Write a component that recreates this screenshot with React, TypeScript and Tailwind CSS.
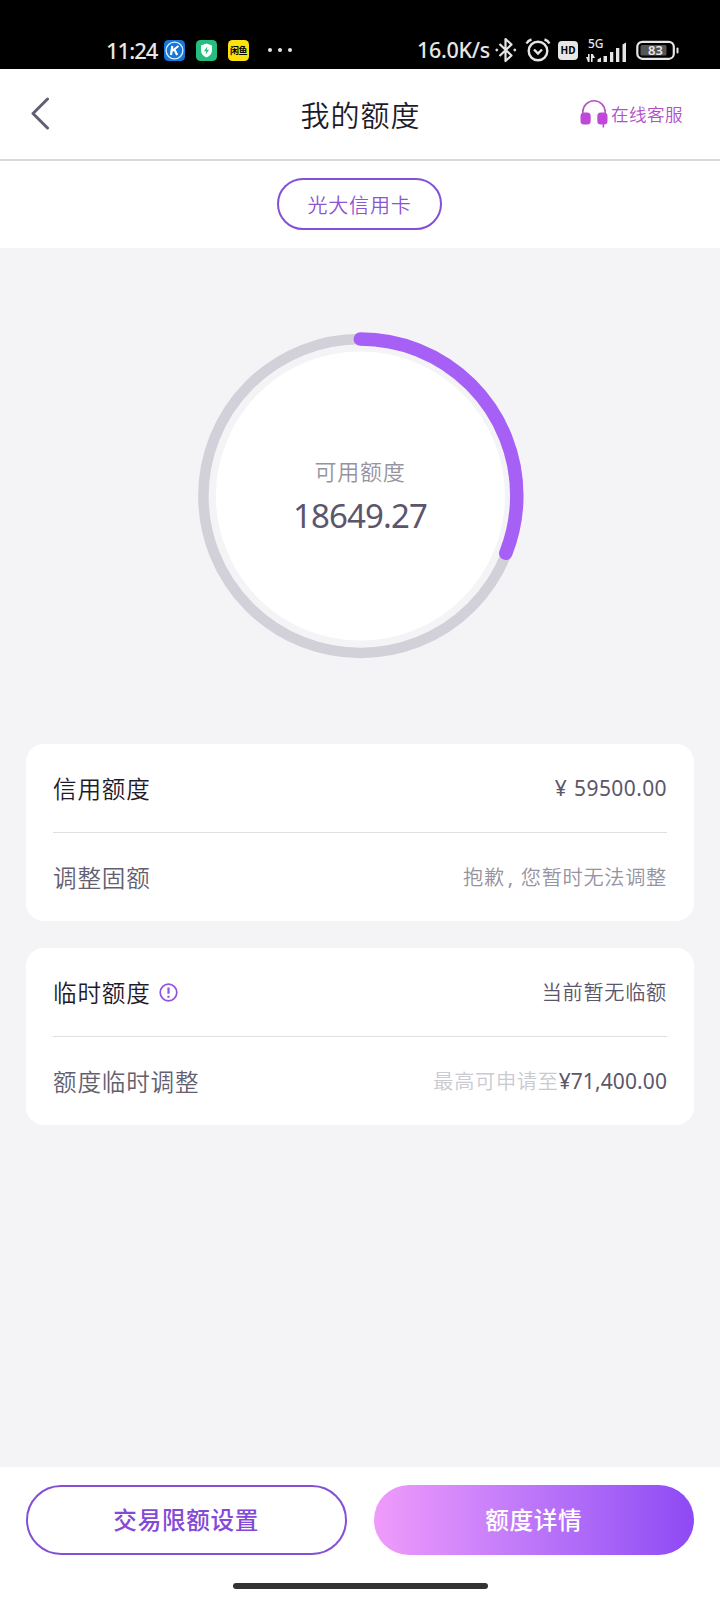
import React from "react";

export default function App() {
  return (
    <div className="flex flex-col w-[720px] h-[1600px] overflow-hidden bg-[#f4f4f7] font-['Noto_Sans','Noto_Sans_CJK_SC',sans-serif]">
      <StatusBar />
      <Header />
      <div className="flex items-center justify-center h-[87px] pr-[1px] pb-px bg-white">
        <button className="w-[165px] h-[52px] rounded-full border-2 border-[#8550d6] text-[#8a55d3] text-[20px] tracking-[0.8px] font-[350] leading-none pt-[3px]">
          光大信用卡
        </button>
      </div>

      <div className="h-[496px] flex items-center justify-center">
        <LimitRing ratio={0.31} label="可用额度" amount="18649.27" />
      </div>

      <main className="flex-1 flex flex-col gap-[27px] px-[26px]">
        <Card>
          <Row label="信用额度" dark>
            <span className="text-[#5c566b] tracking-[0.4px]">
              <span className="mr-px">¥</span> 59500.00
            </span>
          </Row>
          <Row label="调整固额" last>
            <span className="text-[#96939f] text-[20.2px] tracking-[0.7px] font-[350]">
              抱歉<span className="inline-block w-[16px] pl-[3px] font-normal">,</span>您暂时无法调整
            </span>
          </Row>
        </Card>
        <Card>
          <Row label="临时额度" dark info>
            <span className="text-[#5c566b] text-[20.2px] tracking-[0.7px] font-[350]">当前暂无临额</span>
          </Row>
          <Row label="额度临时调整" last>
            <span className="text-[#cbcad0] text-[20.2px] tracking-[0.7px] font-[350]">最高可申请至</span>
            <span className="text-[#5c566b] tracking-[0.1px]">¥71,400.00</span>
          </Row>
        </Card>
      </main>

      <footer className="h-[133px] bg-white px-[26px] pt-[18px] flex flex-col items-center">
        <div className="w-full grid grid-cols-2 gap-[27px] text-[23.6px] tracking-[0.7px] font-medium">
          <button className="h-[70px] rounded-full border-2 border-[#8550d6] text-[#8349d8] pt-[2px]">
            交易限额设置
          </button>
          <button className="h-[70px] rounded-full text-white bg-linear-to-r from-[#f09bfb] to-[#8e49f4] pt-[2px]">
            额度详情
          </button>
        </div>
        <div className="mt-[28px] w-[255px] h-[6px] rounded-full bg-[#333333]" />
      </footer>
    </div>
  );
}

function StatusBar() {
  return (
    <div className="h-[69px] shrink-0 bg-black text-[#e6e6e6] pt-[31px]">
      <div className="flex items-center h-[38px] pl-[106px] pr-[41px]">
        <span className="text-[22px] w-[51px] whitespace-nowrap tracking-[-1px] font-medium">11:24</span>
        <svg className="ml-[7px]" width="21" height="21" viewBox="0 0 21 21" fill="none">
          <rect width="21" height="21" rx="4.5" fill="#1677d8" />
          <circle cx="10.5" cy="10.5" r="8.4" stroke="#d8efff" strokeWidth="1.3" />
          <path d="M8.3 6 7 15M14.5 6 8 11M10.4 9.5 13.2 15" stroke="#fff" strokeWidth="2.2" />
        </svg>
        <svg className="ml-[11px]" width="21" height="21" viewBox="0 0 21 21">
          <rect width="21" height="21" rx="4.5" fill="#25bd80" />
          <path d="M10.5 3.5 16 5.4v5.2c0 3.2-2.2 5.5-5.5 7-3.3-1.5-5.5-3.8-5.5-7V5.4z" fill="#fff" />
          <path d="M11.3 6.5 8 11.2h2.2l-.6 3.4 3.4-4.8h-2.2z" fill="#25bd80" />
        </svg>
        <span className="ml-[11px] w-[21px] h-[21px] rounded-[4.5px] bg-[#fbe20c] text-black text-[9px] font-bold flex items-center justify-center leading-none tracking-[-0.5px]">
          闲鱼
        </span>
        <div className="ml-[19px] flex gap-[6px]">
          <i className="w-1 h-1 rounded-full bg-[#e6e6e6]" />
          <i className="w-1 h-1 rounded-full bg-[#e6e6e6]" />
          <i className="w-1 h-1 rounded-full bg-[#e6e6e6]" />
        </div>

        <div className="ml-auto flex items-center">
          <span className="text-[21.5px] w-[73px] whitespace-nowrap tracking-[-0.3px] font-medium">16.0K/s</span>
          <svg className="ml-[4px]" width="24" height="26" viewBox="0 0 24 26" fill="none" stroke="#e6e6e6" strokeWidth="2.2">
            <path d="m5.5 7 12 11.5-6 5.5V2l6 5.5L5.5 19" strokeLinejoin="round" />
            <circle cx="2.8" cy="13" r="1" fill="#e6e6e6" strokeWidth="1" />
            <circle cx="20.8" cy="13" r="1" fill="#e6e6e6" strokeWidth="1" />
          </svg>
          <svg className="ml-[7px] -mt-px" width="26" height="26" viewBox="0 0 26 26" fill="none" stroke="#e6e6e6" strokeWidth="2.4">
            <circle cx="13" cy="14" r="9.3" />
            <path d="m9 12.5 4 4 4-4M1.5 6.5Q3 3.5 6.5 2.5M24.5 6.5Q23 3.5 19.5 2.5" />
          </svg>
          <span className="ml-[7px] w-[20px] h-[19px] rounded-[4px] bg-[#e6e6e6] text-black text-[10px] font-bold flex items-center justify-center leading-none">
            HD
          </span>
          <div className="ml-[8px] w-[43px] h-[27px] flex flex-col">
            <span className="ml-[2px] text-[12px] leading-[14px] h-[11px] font-medium">5G</span>
            <svg className="-mt-[6px]" width="43" height="20" viewBox="0 4 43 20" fill="#e6e6e6">
              <path d="M0 19h2v-3h1.600V24H2zM5 16h1.800L9 20H6.600v4H5zM11.500 21.500 15 19.500V24h-3.500zM17.500 18H21v6h-3.500zM24 14h3.300V24H24zM30 10h3.300v14H30zM36.500 6.500 40 4.500V24h-3.500z" />
            </svg>
          </div>
          <svg className="ml-[7px]" width="43" height="21" viewBox="0 0 43 21" fill="none">
            <rect x="1.300" y="1.800" width="36.500" height="17" rx="5" stroke="#e6e6e6" strokeWidth="2.200" />
            <rect x="4.500" y="5" width="26" height="10.600" rx="1.500" fill="#555" />
            <rect x="40.500" y="7.500" width="2" height="6" rx="1" fill="#e6e6e6" />
            <text x="19.500" y="14.800" textAnchor="middle" fontSize="13" fontWeight="600" fill="#e6e6e6">83</text>
          </svg>
        </div>
      </div>
    </div>
  );
}

function Header() {
  return (
    <header className="grid grid-cols-3 items-center h-[92px] shrink-0 bg-white border-b-2 border-[#d9d9db] pl-[30px] pr-[37px]">
      <svg className="-mt-[2px]" width="20" height="34" viewBox="0 0 20 34" fill="none">
        <path d="M17.500 3 3 17.500 17.500 32" stroke="#635e70" strokeWidth="3" strokeLinecap="round" strokeLinejoin="round" />
      </svg>
      <h1 className="text-[29px] tracking-[1px] text-center text-[#1e1a2b] font-[350] leading-none ml-[8px] mt-[3px]">
        我的额度
      </h1>
      <div className="flex items-center justify-end text-[#b14fc9] text-[17.6px] tracking-[0.4px] font-[350]">
        <svg className="mr-[3px]" width="28" height="28" viewBox="0 0 28 28" fill="#c048d8">
          <path d="M2.800 14V12a11.200 11.200 0 0 1 22.400 0v2" fill="none" stroke="#b357c4" strokeWidth="1.600" />
          <rect x="0.500" y="12.500" width="10.200" height="12" rx="3.500" />
          <rect x="17.300" y="12.500" width="10.200" height="12" rx="3.500" />
          <path d="M22.600 24h1.500v3.500h-1.500z" />
        </svg>
        <span className="leading-none whitespace-nowrap mt-px">在线客服</span>
      </div>
    </header>
  );
}

function LimitRing({ ratio, label, amount }: { ratio: number; label: string; amount: string }) {
  const length = 2 * Math.PI * 156.5;
  return (
    <div className="grid place-items-center w-[328px] h-[328px]">
      <svg className="col-start-1 row-start-1" width="328" height="328" viewBox="0 0 328 328" fill="none">
        <circle cx="164.400" cy="164" r="144.500" fill="#fff" />
        <circle cx="164.400" cy="164" r="157" stroke="#d2d0d8" strokeWidth="10.500" />
        <circle
          cx="164.300"
          cy="163.500"
          r="156.500"
          stroke="#a660f5"
          strokeWidth="13.500"
          strokeLinecap="round"
          strokeDasharray={`${length * ratio} ${length}`}
          transform="rotate(-90 164.300 163.500)"
        />
      </svg>
      <div className="col-start-1 row-start-1 flex flex-col items-center pt-[2px]">
        <p className="text-[22px] tracking-[0.7px] font-[350] leading-[30px] text-[#96939f]">{label}</p>
        <p className="text-[33px] leading-[44px] mt-[8px] text-[#5c566b] tracking-[-0.9px]">{amount}</p>
      </div>
    </div>
  );
}

function Card({ children }: { children: React.ReactNode }) {
  return <section className="bg-white rounded-[18px] px-[27px]">{children}</section>;
}

function Row({
  label,
  children,
  dark,
  info,
  last,
}: {
  label: string;
  children: React.ReactNode;
  dark?: boolean;
  info?: boolean;
  last?: boolean;
}) {
  return (
    <div
      className={`flex items-center justify-between ${
        last ? "h-[88px]" : "h-[89px] border-b border-[#dfdfe3]"
      }`}
    >
      <div className={`flex items-center leading-none ${dark ? "text-[#1e1a2b]" : "text-[#635e70]"}`}>
        <span className="text-[23.6px] tracking-[0.8px] font-[350] mt-[3px]">{label}</span>
        {info && (
          <svg className="ml-[8px]" width="19" height="19" viewBox="0 0 19 19" fill="none" stroke="#8f55dc">
            <circle cx="9.500" cy="9.500" r="8.300" strokeWidth="1.700" />
            <path d="M9.500 4.500v6.300M9.500 12.700v2" strokeWidth="2.200" />
          </svg>
        )}
      </div>
      <div className="text-[21px] leading-none whitespace-nowrap">{children}</div>
    </div>
  );
}
